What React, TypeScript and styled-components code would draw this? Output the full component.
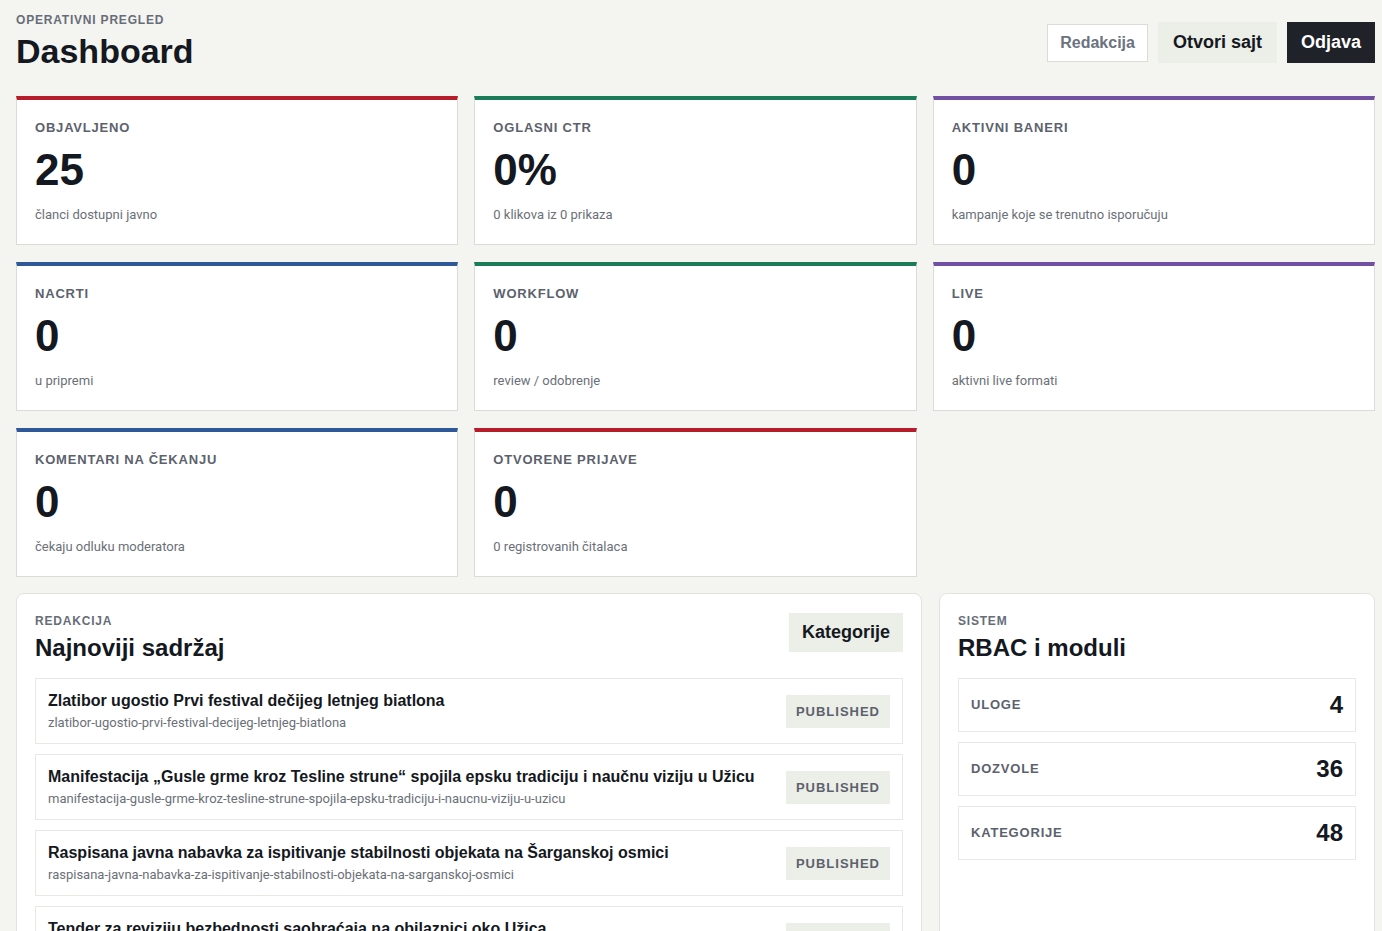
import styled, { createGlobalStyle } from 'styled-components';

const GlobalStyle = createGlobalStyle`
  html, body {
    margin: 0;
    background: #f4f4f0;
  }
  body {
    font-family: 'Liberation Sans', Arial, sans-serif;
    color: #141821;
  }
  * {
    box-sizing: border-box;
  }
`;

const StyledPage = styled.div`
  padding: 13px 7px 24px 16px;
`;

const StyledHeader = styled.header`
  display: flex;
  justify-content: space-between;
  align-items: center;
  margin-bottom: 24px;
`;

const StyledEyebrow = styled.div`
  font-size: 12px;
  line-height: 15px;
  font-weight: 700;
  letter-spacing: 0.8px;
  text-transform: uppercase;
  color: #676d78;
`;

const StyledPageTitle = styled.h1`
  margin: 3px 0 0;
  font-size: 34px;
  line-height: 41px;
  font-weight: 700;
  color: #141821;
`;

const StyledActions = styled.div`
  display: flex;
  align-items: center;
  gap: 10px;
`;

const StyledButton = styled.button<{ $variant: 'outline' | 'soft' | 'dark' }>`
  font-family: 'Liberation Sans', Arial, sans-serif;
  font-size: ${(p) => (p.$variant === 'outline' ? '16px' : '18px')};
  font-weight: 700;
  line-height: ${(p) => (p.$variant === 'outline' ? '18px' : '21px')};
  cursor: pointer;
  border: ${(p) => (p.$variant === 'outline' ? '1px solid #dcdcd6' : 'none')};
  padding: ${(p) => (p.$variant === 'outline' ? '9px 12px' : p.$variant === 'dark' ? '10px 14px' : '10px 15px')};
  background: ${(p) => (p.$variant === 'outline' ? '#ffffff' : p.$variant === 'dark' ? '#1f2229' : '#eceee8')};
  color: ${(p) => (p.$variant === 'outline' ? '#6b7280' : p.$variant === 'dark' ? '#ffffff' : '#141821')};
`;

const StyledStatGrid = styled.div`
  display: grid;
  grid-template-columns: repeat(3, 1fr);
  column-gap: 16px;
  row-gap: 17px;
  margin-bottom: 16px;
`;

const StyledStatCard = styled.div<{ $accent: string }>`
  background: #ffffff;
  border: 1px solid #dcdcd6;
  border-top: 4px solid ${(p) => p.$accent};
  padding: 20px 18px 21px;
`;

const StyledStatLabel = styled.div`
  font-size: 13px;
  line-height: 16px;
  font-weight: 700;
  letter-spacing: 0.8px;
  text-transform: uppercase;
  color: #5c626d;
`;

const StyledStatValue = styled.div`
  margin-top: 11px;
  font-size: 44px;
  line-height: 46px;
  font-weight: 700;
  color: #141821;
`;

const StyledStatNote = styled.div`
  margin-top: 14px;
  font-family: Roboto, 'Liberation Sans', sans-serif;
  font-size: 13px;
  line-height: 16px;
  color: #6b7078;
`;

const StyledBottom = styled.div`
  display: grid;
  grid-template-columns: 1fr 436px;
  gap: 17px;
  align-items: start;
`;

const StyledPanel = styled.section`
  background: #ffffff;
  border: 1px solid #e3e3dd;
  border-radius: 8px;
  padding: 20px 18px 18px;
  min-height: 360px;
`;

const StyledPanelHead = styled.div`
  display: flex;
  justify-content: space-between;
  align-items: flex-start;
  margin-bottom: 16px;
`;

const StyledPanelTitle = styled.h2`
  margin: 4px 0 0;
  font-size: 24px;
  line-height: 29px;
  font-weight: 700;
  color: #141821;
`;

const StyledSoftButton = styled.button`
  margin-top: -1px;
  font-family: 'Liberation Sans', Arial, sans-serif;
  font-size: 18px;
  font-weight: 700;
  line-height: 21px;
  padding: 9px 13px;
  border: none;
  background: #eceee8;
  color: #141821;
  cursor: pointer;
`;

const StyledList = styled.div`
  display: flex;
  flex-direction: column;
  gap: 10px;
`;

const StyledArticle = styled.div`
  display: flex;
  align-items: center;
  justify-content: space-between;
  gap: 16px;
  border: 1px solid #e9e9e4;
  padding: 12px;
`;

const StyledArticleTitle = styled.div`
  font-size: 16px;
  line-height: 20px;
  font-weight: 700;
  color: #141821;
`;

const StyledSlug = styled.div`
  margin-top: 4px;
  font-family: Roboto, 'Liberation Sans', sans-serif;
  font-size: 13px;
  line-height: 16px;
  color: #6b7078;
`;

const StyledBadge = styled.span`
  flex-shrink: 0;
  font-size: 13px;
  line-height: 15px;
  font-weight: 700;
  letter-spacing: 1px;
  padding: 9px 10px;
  background: #eceee8;
  color: #5c626d;
`;

const StyledMetricRow = styled.div`
  display: flex;
  align-items: center;
  justify-content: space-between;
  border: 1px solid #e9e9e4;
  padding: 12px 12px;
`;

const StyledMetricValue = styled.span`
  font-size: 24px;
  line-height: 28px;
  font-weight: 700;
  color: #141821;
`;

const stats = [
  { label: 'Objavljeno', value: '25', note: 'članci dostupni javno', accent: '#b71c2b' },
  { label: 'Oglasni CTR', value: '0%', note: '0 klikova iz 0 prikaza', accent: '#1b7d58' },
  { label: 'Aktivni baneri', value: '0', note: 'kampanje koje se trenutno isporučuju', accent: '#7150a3' },
  { label: 'Nacrti', value: '0', note: 'u pripremi', accent: '#2f5899' },
  { label: 'Workflow', value: '0', note: 'review / odobrenje', accent: '#1b7d58' },
  { label: 'Live', value: '0', note: 'aktivni live formati', accent: '#7150a3' },
  { label: 'Komentari na čekanju', value: '0', note: 'čekaju odluku moderatora', accent: '#2f5899' },
  { label: 'Otvorene prijave', value: '0', note: '0 registrovanih čitalaca', accent: '#b71c2b' },
];

const articles = [
  {
    title: 'Zlatibor ugostio Prvi festival dečijeg letnjeg biatlona',
    slug: 'zlatibor-ugostio-prvi-festival-decijeg-letnjeg-biatlona',
  },
  {
    title: 'Manifestacija „Gusle grme kroz Tesline strune“ spojila epsku tradiciju i naučnu viziju u Užicu',
    slug: 'manifestacija-gusle-grme-kroz-tesline-strune-spojila-epsku-tradiciju-i-naucnu-viziju-u-uzicu',
  },
  {
    title: 'Raspisana javna nabavka za ispitivanje stabilnosti objekata na Šarganskoj osmici',
    slug: 'raspisana-javna-nabavka-za-ispitivanje-stabilnosti-objekata-na-sarganskoj-osmici',
  },
  {
    title: 'Tender za reviziju bezbednosti saobraćaja na obilaznici oko Užica',
    slug: 'tender-za-reviziju-bezbednosti-saobracaja-na-obilaznici-oko-uzica',
  },
];

const metrics = [
  { label: 'Uloge', value: 4 },
  { label: 'Dozvole', value: 36 },
  { label: 'Kategorije', value: 48 },
];

export default function App() {
  return (
    <StyledPage>
      <GlobalStyle />
      <StyledHeader>
        <div>
          <StyledEyebrow>Operativni pregled</StyledEyebrow>
          <StyledPageTitle>Dashboard</StyledPageTitle>
        </div>
        <StyledActions>
          <StyledButton $variant='outline'>Redakcija</StyledButton>
          <StyledButton $variant='soft'>Otvori sajt</StyledButton>
          <StyledButton $variant='dark'>Odjava</StyledButton>
        </StyledActions>
      </StyledHeader>

      <StyledStatGrid>
        {stats.map((s) => (
          <StyledStatCard key={s.label} $accent={s.accent}>
            <StyledStatLabel>{s.label}</StyledStatLabel>
            <StyledStatValue>{s.value}</StyledStatValue>
            <StyledStatNote>{s.note}</StyledStatNote>
          </StyledStatCard>
        ))}
      </StyledStatGrid>

      <StyledBottom>
        <StyledPanel>
          <StyledPanelHead>
            <div>
              <StyledEyebrow>Redakcija</StyledEyebrow>
              <StyledPanelTitle>Najnoviji sadržaj</StyledPanelTitle>
            </div>
            <StyledSoftButton>Kategorije</StyledSoftButton>
          </StyledPanelHead>
          <StyledList>
            {articles.map((a) => (
              <StyledArticle key={a.slug}>
                <div>
                  <StyledArticleTitle>{a.title}</StyledArticleTitle>
                  <StyledSlug>{a.slug}</StyledSlug>
                </div>
                <StyledBadge>PUBLISHED</StyledBadge>
              </StyledArticle>
            ))}
          </StyledList>
        </StyledPanel>

        <StyledPanel>
          <StyledPanelHead>
            <div>
              <StyledEyebrow>Sistem</StyledEyebrow>
              <StyledPanelTitle>RBAC i moduli</StyledPanelTitle>
            </div>
          </StyledPanelHead>
          <StyledList>
            {metrics.map((m) => (
              <StyledMetricRow key={m.label}>
                <StyledStatLabel>{m.label}</StyledStatLabel>
                <StyledMetricValue>{m.value}</StyledMetricValue>
              </StyledMetricRow>
            ))}
          </StyledList>
        </StyledPanel>
      </StyledBottom>
    </StyledPage>
  );
}
